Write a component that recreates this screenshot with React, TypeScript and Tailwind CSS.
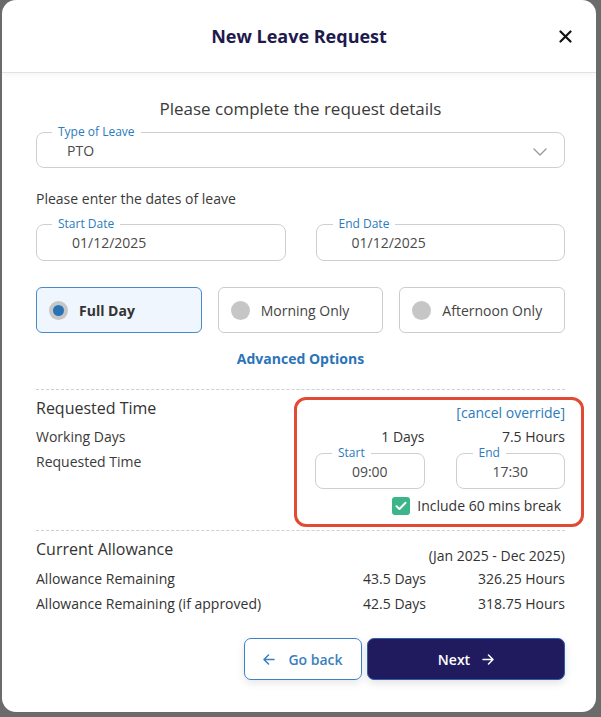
import React from "react";

const font = { fontFamily: '"Open Sans", "Noto Sans", sans-serif' };

function Field({
  label,
  value,
  className = "",
  labelLeft = "left-[16px]",
  valueClass = "pl-[35px]",
  children,
}: {
  label: string;
  value: string;
  className?: string;
  labelLeft?: string;
  valueClass?: string;
  children?: React.ReactNode;
}) {
  return (
    <div className={`relative flex items-center rounded-[8px] border border-[#cfcfcf] bg-white ${className}`}>
      <span className={`absolute top-[-9px] ${labelLeft} bg-white px-[6px] text-[12px] leading-4 text-[#2b7bbd]`}>
        {label}
      </span>
      <span className={`text-[14px] text-[#4a4a4a] ${valueClass}`}>{value}</span>
      {children}
    </div>
  );
}

function Radio({ label, selected }: { label: string; selected?: boolean }) {
  return (
    <div
      className={`flex h-[46px] items-center gap-[11px] rounded-[6px] border pl-[12px] ${
        selected ? "border-[#4a8ac9] bg-[#eff6fd]" : "border-[#cccccc] bg-white"
      }`}
    >
      {selected ? (
        <span className="flex h-[19px] w-[19px] items-center justify-center rounded-full bg-[#c6c6c6]">
          <span className="h-[11px] w-[11px] rounded-full bg-[#2a72b8]" />
        </span>
      ) : (
        <span className="h-[19px] w-[19px] rounded-full bg-[#c6c6c6]" />
      )}
      <span className={`text-[14px] ${selected ? "font-bold text-[#333]" : "text-[#444]"}`}>{label}</span>
    </div>
  );
}

export default function App() {
  return (
    <div className="h-[717px] w-[601px] overflow-hidden bg-[#6b6b6b] pl-[2px]" style={font}>
      <div className="flex h-[712px] w-[594px] flex-col overflow-hidden rounded-[14px] bg-white">
        {/* Header */}
        <div className="relative flex h-[73px] shrink-0 items-center justify-center border-b border-[#e2e2e2] shadow-[0_3px_8px_rgba(0,0,0,0.04)]">
          <h1 className="text-[18px] font-bold text-[#1e1a4d]">New Leave Request</h1>
          <svg
            className="absolute right-[24px] top-[30px]"
            width="13"
            height="13"
            viewBox="0 0 13 13"
            fill="none"
            stroke="#111"
            strokeWidth="2.2"
            strokeLinecap="round"
          >
            <path d="M1.5 1.5 L11.5 11.5 M11.5 1.5 L1.5 11.5" />
          </svg>
        </div>

        {/* Body */}
        <div className="flex flex-col pl-[34px] pr-[31px]">
          <p className="mt-[24px] text-center text-[17px] leading-6 text-[#3a3a3a]">
            Please complete the request details
          </p>

          <Field
            label="Type of Leave"
            value="PTO"
            className="mt-[11px] h-[36px]"
            labelLeft="left-[15px]"
            valueClass="pl-[30px]"
          >
            <svg
              className="absolute right-[17px] top-[15px]"
              width="14"
              height="8"
              viewBox="0 0 14 8"
              fill="none"
              stroke="#9a9a9a"
              strokeWidth="1.4"
              strokeLinecap="round"
              strokeLinejoin="round"
            >
              <path d="M1 1 L7 7 L13 1" />
            </svg>
          </Field>

          <p className="mt-[21px] text-[14px] leading-5 text-[#3a3a3a]">Please enter the dates of leave</p>

          <div className="mt-[15px] grid grid-cols-2 gap-[30px]">
            <Field label="Start Date" value="01/12/2025" className="h-[37px]" labelLeft="left-[15px]" />
            <Field label="End Date" value="01/12/2025" className="h-[37px]" labelLeft="left-[16px]" />
          </div>

          <div className="mt-[26px] grid grid-cols-3 gap-[16px]">
            <Radio label="Full Day" selected />
            <Radio label="Morning Only" />
            <Radio label="Afternoon Only" />
          </div>

          <p className="mt-[16px] text-center text-[14px] font-bold leading-5 text-[#2b74b8]">Advanced Options</p>

          <div className="mt-[20px] border-t border-dashed border-[#cfcfcf]" />

          {/* Requested Time */}
          <div className="mt-[7px] flex items-start justify-between">
            <div className="-mt-px flex flex-col">
              <p className="text-[16px] leading-6 text-[#333]">Requested Time</p>
              <p className="mt-[7px] text-[14px] leading-5 text-[#3a3a3a]">Working Days</p>
              <p className="mt-[5px] text-[14px] leading-5 text-[#3a3a3a]">Requested Time</p>
            </div>
            <div className="-mr-[19px] w-[290px] rounded-[12px] border-[3px] border-[#e24a33] pb-[8px] pl-[18px] pr-[16px] pt-[3px]">
              <p className="text-right text-[14px] leading-5 text-[#2b7bbd]">[cancel override]</p>
              <div className="mt-[4px] grid grid-cols-2 gap-[31px] text-right text-[14px] leading-5 text-[#333]">
                <span>1 Days</span>
                <span>7.5 Hours</span>
              </div>
              <div className="mt-[6px] grid grid-cols-2 gap-[31px]">
                <Field
                  label="Start"
                  value="09:00"
                  className="h-[36px] justify-center"
                  labelLeft="left-[16px]"
                  valueClass=""
                />
                <Field
                  label="End"
                  value="17:30"
                  className="h-[36px] justify-center"
                  labelLeft="left-[16px]"
                  valueClass=""
                />
              </div>
              <div className="mt-[7px] flex items-center justify-end gap-[7px] pr-[4px]">
                <span className="flex h-[18px] w-[18px] items-center justify-center rounded-[3px] bg-[#3db58b]">
                  <svg width="12" height="10" viewBox="0 0 12 10" fill="none" stroke="white" strokeWidth="2" strokeLinecap="round" strokeLinejoin="round">
                    <path d="M1.5 5.2 L4.5 8 L10.5 1.8" />
                  </svg>
                </span>
                <span className="text-[14px] leading-5 text-[#333]">Include 60 mins break</span>
              </div>
            </div>
          </div>

          <div className="mt-[3px] border-t border-dashed border-[#cfcfcf]" />

          {/* Current Allowance */}
          <div className="mt-[6px] flex items-start justify-between">
            <p className="text-[16px] leading-6 text-[#333]">Current Allowance</p>
            <p className="mt-[9px] text-[14px] leading-5 text-[#333]">(Jan 2025 - Dec 2025)</p>
          </div>
          <div className="mt-[3px] grid grid-cols-[1fr_110px_109px] gap-x-[30px] gap-y-[5px] text-[14px] leading-5 text-[#333]">
            <span>Allowance Remaining</span>
            <span className="text-right">43.5 Days</span>
            <span className="text-right">326.25 Hours</span>
            <span>Allowance Remaining (if approved)</span>
            <span className="text-right">42.5 Days</span>
            <span className="text-right">318.75 Hours</span>
          </div>

          {/* Buttons */}
          <div className="mt-[24px] flex justify-end gap-[5px]">
            <button className="flex h-[42px] w-[118px] items-center justify-center gap-[13px] rounded-[7px] border border-[#3b82c4] bg-white text-[14px] font-semibold text-[#3a7fc0] shadow-[0_3px_8px_rgba(0,0,0,0.1)]">
              <svg width="12" height="11" viewBox="0 0 12 11" fill="none" stroke="#3a7fc0" strokeWidth="1.5" strokeLinecap="round" strokeLinejoin="round">
                <path d="M11 5.5 H1.2 M5.5 1 L1 5.5 L5.5 10" />
              </svg>
              Go back
            </button>
            <button className="flex h-[42px] w-[198px] items-center justify-center gap-[12px] rounded-[7px] border border-[#2f5ea8] bg-[#1f1b5e] text-[14px] font-semibold text-white shadow-[0_3px_8px_rgba(0,0,0,0.12)]">
              Next
              <svg width="12" height="11" viewBox="0 0 12 11" fill="none" stroke="white" strokeWidth="1.5" strokeLinecap="round" strokeLinejoin="round">
                <path d="M1 5.5 H10.8 M6.5 1 L11 5.5 L6.5 10" />
              </svg>
            </button>
          </div>
        </div>
      </div>
    </div>
  );
}
